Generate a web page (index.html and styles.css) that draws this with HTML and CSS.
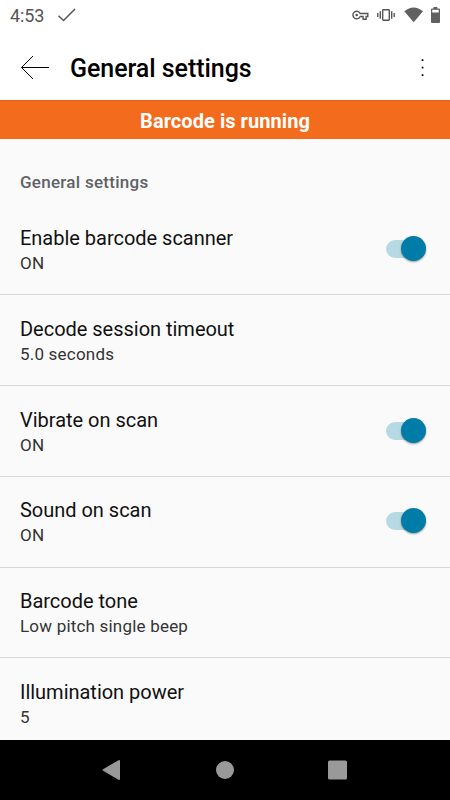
FILE: index.html
```html
<!DOCTYPE html>
<html lang="en">
<head>
<meta charset="utf-8">
<title>General settings</title>
<link rel="stylesheet" href="styles.css">
</head>
<body>
<div class="screen">
  <div class="status">
    <span class="time">4:53</span>
    <svg class="check" width="20" height="16" viewBox="0 0 20 16"><path d="M1.500 7.800 6.500 12.500 18 1" fill="none" stroke="#555" stroke-width="1.500"/></svg>
    <svg class="indicators" width="90" height="20" viewBox="0 0 90 20">
      <g fill="none" stroke="#555" stroke-width="1.400">
        <path d="M10.200 8.500h7.600v3h-1.700v2.700h-3v-2.700h-2.900a3.800 3.800 0 1 1 0-3z"/>
        <rect x="32.700" y="4.700" width="6.600" height="10.600" rx=".7"/>
        <path d="M30.300 6.300v7.400M27.800 8v4M41.700 6.300v7.400M44.200 8v4"/>
      </g>
      <circle cx="6.700" cy="10" r="1.300" fill="#555"/>
      <path d="M54.300 6.200Q63.600-1.400 73 6.200L63.700 17.300z" fill="#606060"/>
      <path d="M83.500 2h3.800v1.500H89q1 0 1 1V17q0 1-1 1h-7q-1 0-1-1V4.500q0-1 1-1h1.500z" fill="#606060"/>
      <path d="M82.200 4.800h6.500v2.700h-6.500z" fill="#fff"/>
    </svg>
  </div>
  <header class="appbar">
    <svg width="30" height="26" viewBox="0 0 30 26"><path d="M29 12.500H1.500M13 1 1.500 12.500 13 24" fill="none" stroke="#000" stroke-width="1"/></svg>
    <h1>General settings</h1>
    <svg class="more" width="6" height="20" viewBox="0 0 6 20"><path d="M1.700 1.200h1.700v1.700H1.700zM1.700 8.700h1.700v1.700H1.700zM1.700 16.200h1.700v1.700H1.700z"/></svg>
  </header>
  <div class="banner">Barcode is running</div>
  <main class="list">
    <h2>General settings</h2>
    <section class="row"><div><div class="name">Enable barcode scanner</div><div class="value">ON</div></div><span class="switch"></span></section>
    <section class="row"><div><div class="name">Decode session timeout</div><div class="value">5.0 seconds</div></div></section>
    <section class="row"><div><div class="name">Vibrate on scan</div><div class="value">ON</div></div><span class="switch"></span></section>
    <section class="row"><div><div class="name">Sound on scan</div><div class="value">ON</div></div><span class="switch"></span></section>
    <section class="row"><div><div class="name">Barcode tone</div><div class="value">Low pitch single beep</div></div></section>
    <section class="row"><div><div class="name">Illumination power</div><div class="value">5</div></div></section>
  </main>
  <nav class="navbar">
    <svg width="450" height="60" viewBox="0 0 450 60" fill="#999"><path d="M103.500 29 118.500 20.200q1.500-.9 1.500.8v18q0 1.700-1.500.8L103.500 31q-2-1 0-2z"/><circle cx="225" cy="30" r="9"/><rect x="328" y="20.500" width="19" height="19" rx="1.500"/></svg>
  </nav>
</div>
</body>
</html>
```
FILE: styles.css
```css
* { box-sizing: border-box; }
body { margin: 0; background: #fafafa; font-family: Roboto, sans-serif; color: #111; }
.screen { width: 450px; height: 800px; display: flex; flex-direction: column; overflow: hidden; }
.status { height: 32px; flex: none; display: flex; align-items: center; padding: 0 10px; background: #fff; color: #555; }
.time { width: 47px; margin-top: -2px; font-size: 18px; letter-spacing: -.1px; }
.check { margin-top: -1px; }
.indicators { margin: -2px 0 0 auto; overflow: visible; }
.appbar { height: 68px; flex: none; display: flex; align-items: center; padding: 3px 24px 0 20px; background: #fff; }
h1 { margin: 2px 0 0 20px; font-size: 25px; font-weight: 500; line-height: 30px; letter-spacing: -.05px; color: #000; }
.more { margin-left: auto; }
.banner { height: 39.4px; flex: none; border-top: 1px solid #e8601a; background: #f36c1d; color: #fff; font-size: 20px; font-weight: 700; line-height: 40px; letter-spacing: .06px; text-align: center; }
.list { flex: 1; min-height: 0; overflow: hidden; }
h2 { margin: 0; height: 64.6px; padding: 31.6px 20px 0; font-size: 17px; font-weight: 500; line-height: 23px; letter-spacing: .28px; color: #606166; }
.row { height: 90.9px; display: flex; justify-content: space-between; padding: 19.8px 25px 0 20px; border-bottom: 1px solid #d8d8d8; }
.name { font-size: 20px; line-height: 28px; letter-spacing: -.02px; }
.value { font-size: 17px; line-height: 23px; letter-spacing: .2px; color: #333; }
.switch { position: relative; width: 39px; height: 18px; margin-top: 16px; border-radius: 9px; background: #b6dae4; }
.switch::after { content: ""; position: absolute; right: -1px; top: -4px; width: 25px; height: 25px; border-radius: 50%; background: #007ca8; box-shadow: 0 1px 2px rgba(0,0,0,.4); }
.navbar { height: 60px; flex: none; background: #000; }
.navbar svg { display: block; }
```
